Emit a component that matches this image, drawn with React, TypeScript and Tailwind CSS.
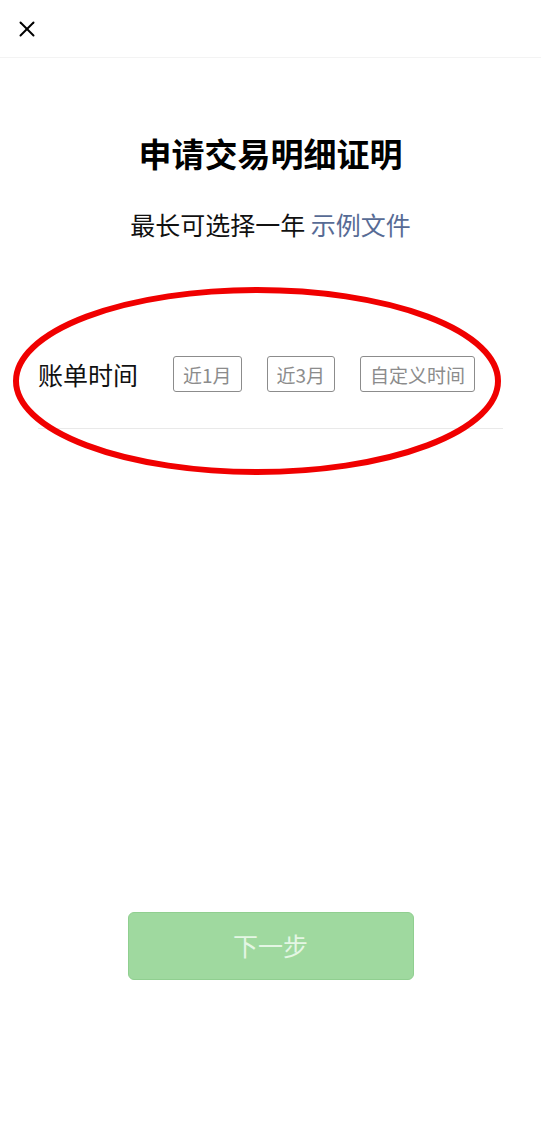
import { X } from "lucide-react";

const font = { fontFamily: '"Noto Sans CJK SC", "Noto Sans", sans-serif' };

const ranges = ["近1月", "近3月", "自定义时间"];

export default function App() {
  return (
    <div className="relative min-h-[1125px] w-full bg-white text-black" style={font}>
      {/* top bar */}
      <div className="flex h-[58px] items-center border-b border-[#f3f3f3] pl-[14px]">
        <X size={26} strokeWidth={1.8} className="text-black" />
      </div>

      <h1 className="mt-[73px] text-center text-[33px] font-bold leading-[45px]">
        申请交易明细证明
      </h1>
      <p className="mt-[31px] text-center text-[25px] leading-[35px] text-[#111]">
        最长可选择一年 <span className="text-[#576b95]">示例文件</span>
      </p>

      {/* bill time row */}
      <div className="mx-[38px] mt-[114px] flex items-center border-b border-[#e9e9e9] pb-[36px]">
        <span className="text-[25px] leading-[36px] text-[#111]">账单时间</span>
        <div className="ml-[35px] flex gap-[25px]">
          {ranges.map((r) => (
            <button
              key={r}
              type="button"
              className="flex h-[36px] items-center rounded-[3px] border border-[#8c8c8c] px-[9px] text-[19px] leading-none text-[#8c8c8c]"
            >
              {r}
            </button>
          ))}
        </div>
      </div>

      {/* red annotation */}
      <svg
        className="pointer-events-none absolute left-[10px] top-[284px]"
        width="494"
        height="194"
        viewBox="0 0 494 194"
      >
        <ellipse cx="247" cy="97" rx="241" ry="91" fill="none" stroke="#f00000" strokeWidth="6" />
      </svg>

      <div className="mt-[483px] flex justify-center">
        <button
          type="button"
          className="h-[68px] w-[286px] rounded-[6px] border border-[#90cf90] bg-[#9fd99f] text-[25px] text-[#e4f6e4]"
        >
          下一步
        </button>
      </div>
    </div>
  );
}
